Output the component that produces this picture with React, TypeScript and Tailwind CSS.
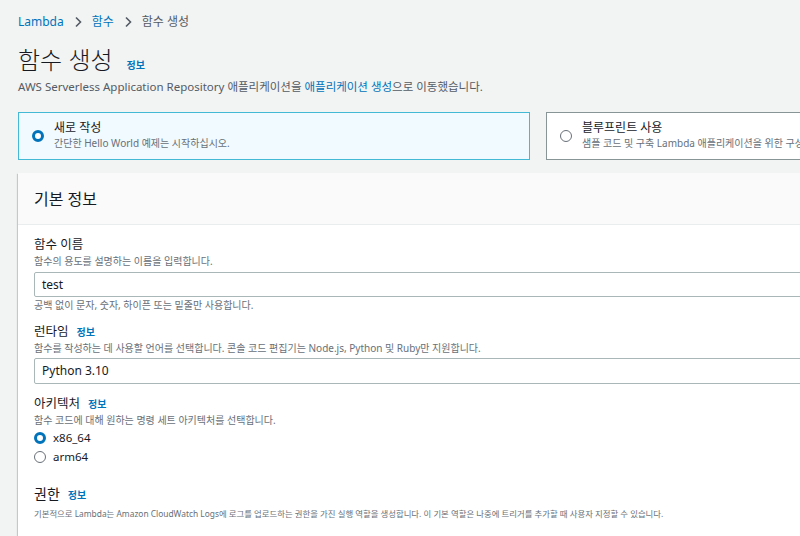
import React from 'react';

const FONT = { fontFamily: '"Noto Sans", "Noto Sans CJK KR", sans-serif' };

const Info = () => (
  <span className="text-[10px] font-bold text-[#0073bb] ml-2">정보</span>
);

const Radio = ({ checked }: { checked?: boolean }) =>
  checked ? (
    <span className="inline-block w-[12px] h-[12px] rounded-full border-[3.5px] border-[#0073bb] bg-white shrink-0" />
  ) : (
    <span className="inline-block w-[12px] h-[12px] rounded-full border border-[#687078] bg-white shrink-0" />
  );

const Chevron = () => (
  <svg width="10" height="12" viewBox="0 0 10 12" className="mx-[9px]">
    <path d="M3 1.5 L7.5 6 L3 10.5" fill="none" stroke="#545b64" strokeWidth="1.6" />
  </svg>
);

export default function App() {
  return (
    <div className="w-[800px] h-[536px] overflow-hidden bg-[#f2f3f3] text-[#16191f]" style={FONT}>
      <div className="w-[1100px] pl-[18px]">
        {/* breadcrumb */}
        <div className="flex items-center h-[16px] mt-[14px] text-[12px]">
          <span className="text-[#0073bb]">Lambda</span>
          <Chevron />
          <span className="text-[#0073bb]">함수</span>
          <Chevron />
          <span className="text-[#545b64]">함수 생성</span>
        </div>

        {/* title */}
        <div className="flex items-baseline mt-[14px] h-[32px]">
          <h1 className="text-[24px] leading-[32px] font-light">함수 생성</h1>
          <span className="text-[10px] font-bold text-[#0073bb] ml-[14px]">정보</span>
        </div>
        <p className="text-[11.5px] text-[#545b64] mt-[3px] leading-[16px]">
          AWS Serverless Application Repository 애플리케이션을{' '}
          <span className="text-[#0073bb]">애플리케이션 생성</span>으로 이동했습니다.
        </p>

        {/* option cards */}
        <div className="flex gap-[16px] mt-[17px]">
          <div className="w-[512px] h-[48px] border border-[#44b9d6] bg-[#f1faff] flex items-start px-[13px] pt-[7px]">
            <div className="mt-[4px] mr-[10px]"><Radio checked /></div>
            <div>
              <div className="text-[12px] leading-[16px]">새로 작성</div>
              <div className="text-[10px] leading-[15px] text-[#687078]">간단한 Hello World 예제는 시작하십시오.</div>
            </div>
          </div>
          <div className="w-[512px] h-[48px] border border-[#879596] bg-white flex items-start px-[13px] pt-[7px]">
            <div className="mt-[4px] mr-[10px]"><Radio /></div>
            <div>
              <div className="text-[12px] leading-[16px]">블루프린트 사용</div>
              <div className="text-[10px] leading-[15px] text-[#687078]">샘플 코드 및 구축 Lambda 애플리케이션을 위한 구성 사전 설정을 사용하여 함수를 빌드합니다.</div>
            </div>
          </div>
        </div>

        {/* panel */}
        <div className="mt-[13px] bg-white w-[1040px] shadow-[0_1px_1px_0_rgba(0,28,36,0.3),1px_1px_1px_0_rgba(0,28,36,0.15),-1px_1px_1px_0_rgba(0,28,36,0.15)]">
          <div className="h-[52px] bg-[#fafafa] border-b border-[#eaeded] flex items-center px-[16px]">
            <h2 className="text-[16px] font-normal">기본 정보</h2>
          </div>
          <div className="px-[16px] pt-[11px] pb-[20px]">
            {/* 함수 이름 */}
            <div className="text-[12.5px] leading-[18px]">함수 이름</div>
            <div className="text-[10px] leading-[14px] text-[#687078]">함수의 용도를 설명하는 이름을 입력합니다.</div>
            <div className="mt-[4px] h-[25px] border border-[#aab7b8] rounded-[2px] flex items-center px-[7px] text-[12px]">test</div>
            <div className="text-[10px] leading-[14px] text-[#687078] mt-[1px]">공백 없이 문자, 숫자, 하이픈 또는 밑줄만 사용합니다.</div>

            {/* 런타임 */}
            <div className="flex items-baseline mt-[11px] text-[12.5px] leading-[18px]">
              <span>런타임</span>
              <Info />
            </div>
            <div className="text-[10px] leading-[14px] text-[#687078]">함수를 작성하는 데 사용할 언어를 선택합니다. 콘솔 코드 편집기는 Node.js, Python 및 Ruby만 지원합니다.</div>
            <div className="mt-[3px] h-[26px] border border-[#aab7b8] rounded-[2px] flex items-center px-[7px] text-[12px]">Python 3.10</div>

            {/* 아키텍처 */}
            <div className="flex items-baseline mt-[11px] text-[12.5px] leading-[18px]">
              <span>아키텍처</span>
              <Info />
            </div>
            <div className="text-[10px] leading-[14px] text-[#687078]">함수 코드에 대해 원하는 명령 세트 아키텍처를 선택합니다.</div>
            <div className="flex items-center gap-[7px] mt-[3px] h-[16px] text-[11.5px]">
              <Radio checked />
              <span>x86_64</span>
            </div>
            <div className="flex items-center gap-[7px] mt-[3px] h-[16px] text-[11.5px]">
              <Radio />
              <span>arm64</span>
            </div>

            {/* 권한 */}
            <div className="flex items-baseline mt-[19px] text-[14px] leading-[20px]">
              <span>권한</span>
              <Info />
            </div>
            <div className="text-[8.4px] leading-[14px] text-[#687078] mt-[2px]">기본적으로 Lambda는 Amazon CloudWatch Logs에 로그를 업로드하는 권한을 가진 실행 역할을 생성합니다. 이 기본 역할은 나중에 트리거를 추가할 때 사용자 지정할 수 있습니다.</div>
          </div>
        </div>
      </div>
    </div>
  );
}
